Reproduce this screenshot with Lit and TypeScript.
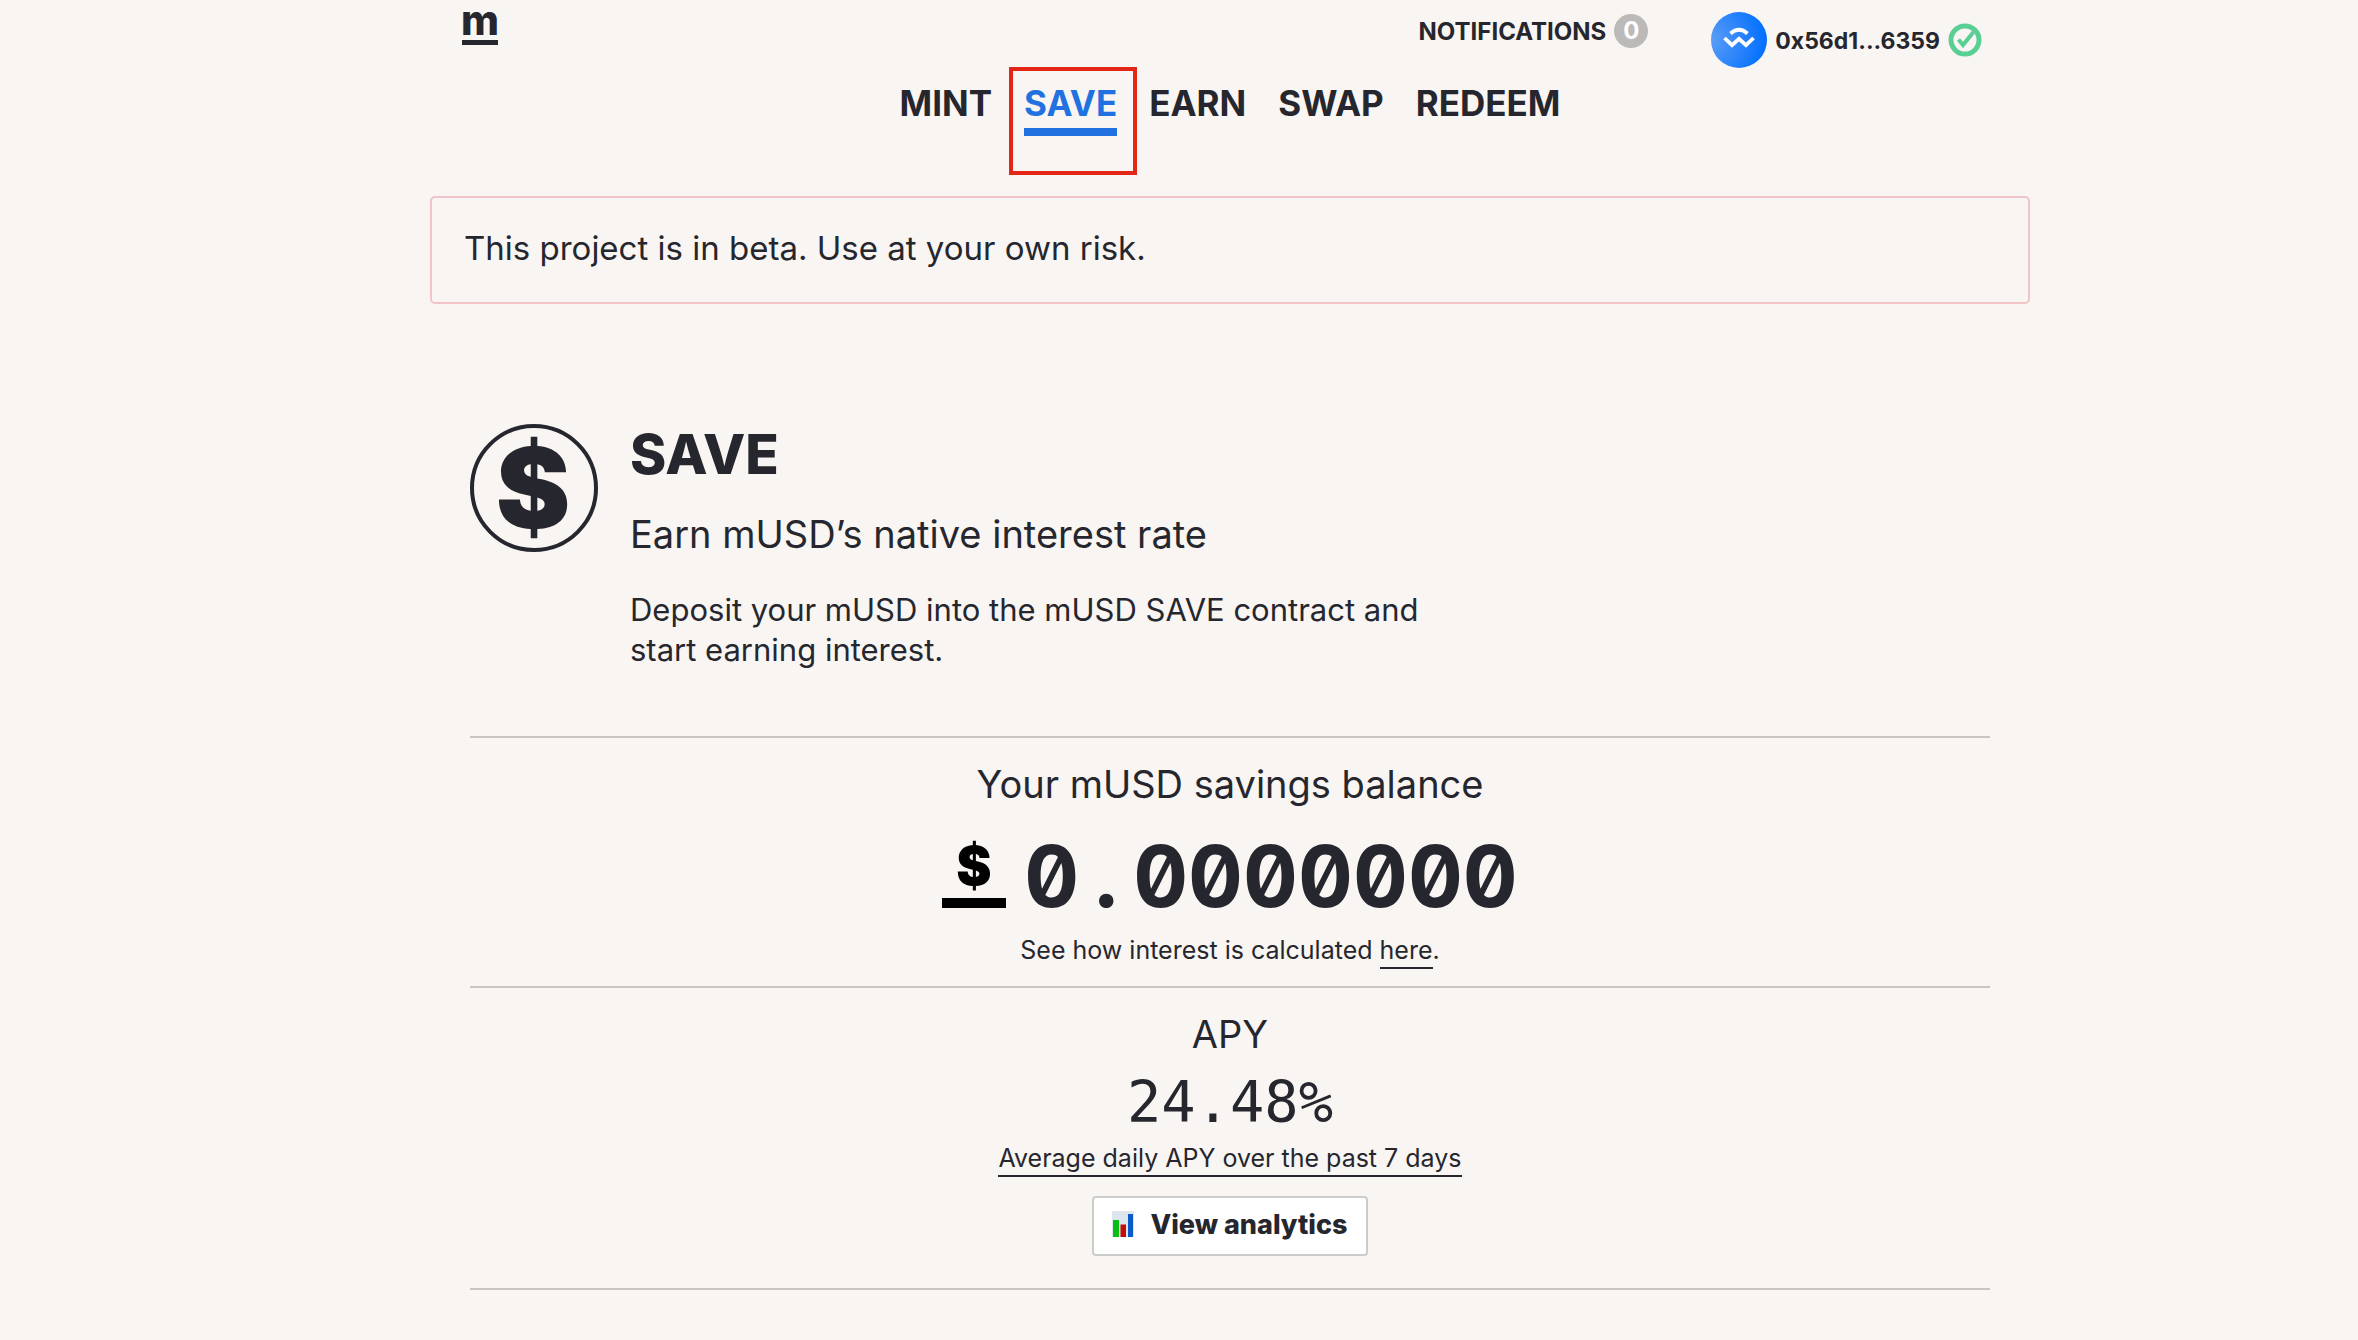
import { LitElement, html, css } from "lit";
import { customElement } from "lit/decorators.js";

interface NavItem { label: string; active?: boolean; }

const NAV: NavItem[] = [
  { label: "MINT" },
  { label: "SAVE", active: true },
  { label: "EARN" },
  { label: "SWAP" },
  { label: "REDEEM" },
];

@customElement("app-root")
export class AppRoot extends LitElement {
  static styles = css`
    :host {
      display: block;
      box-sizing: border-box;
      min-height: 100vh;
      padding-left: 102px;
      background: #f9f5f2;
      color: #26272e;
      font-family: Inter, "Open Sans", sans-serif;
    }
    * { box-sizing: border-box; margin: 0; }
    a { color: inherit; text-decoration: none; }
    svg { display: block; flex: none; overflow: visible; }
    .page { max-width: 1600px; margin: 0 auto; }
    .top { display: flex; align-items: flex-start; height: 80px; padding: 12px 48px 0 32px; }
    .brand { margin-right: auto; }
    button { font: inherit; color: inherit; background: none; border: 0; padding: 0; cursor: pointer; }
    .notifications, .wallet { display: flex; align-items: center; gap: 8px; font-size: 24px; font-weight: 700; }
    .notifications { height: 38px; margin-right: 63px; }
    .wallet { height: 56px; font-size: 23px; }
    .address { padding-top: 2px; }
    .badge { width: 34px; height: 34px; border-radius: 50%; background: #bcbab8; color: #fff; line-height: 34px; text-align: center; }
    .nav { display: flex; justify-content: center; gap: 32px; font-size: 35px; line-height: 46px; font-weight: 700; }
    .nav a { position: relative; padding-bottom: 2px; border-bottom: 8px solid transparent; }
    .nav a.active { color: #2172e0; border-color: #2172e0; }
    .marker { position: absolute; top: -13px; bottom: -47px; left: -15px; right: -20px; border: 4px solid #e42617; }
    .alert { margin-top: 60px; padding: 28px 32px 32px; border: 2px solid #f1c4c8; border-radius: 5px; font-size: 33px; line-height: 44px; }
    main { padding: 120px 40px 0; }
    .hero { display: flex; gap: 32px; padding-bottom: 66px; }
    h1 { font-size: 55px; line-height: 60px; font-weight: 800; margin-bottom: 26px; }
    h2 { font-size: 38px; line-height: 48px; font-weight: 400; }
    .lead { max-width: 820px; margin-top: 32px; font-size: 31px; line-height: 40px; }
    .panel { display: flex; flex-direction: column; align-items: center; padding-top: 22px; border-top: 2px solid #c8c4c1; }
    .balance { padding-bottom: 20px; }
    .amount { display: flex; align-items: center; gap: 18px; height: 80px; margin: 28px 0 18px; font-size: 85px; font-weight: 700; font-feature-settings: "tnum", "zero"; }
    .point { display: inline-block; width: 54px; text-align: center; }
    .note { font-size: 25px; line-height: 32px; }
    .note a { border-bottom: 2px solid #26272e; padding-bottom: 2px; }
    .rate { margin: 12px 0 8px; font-family: "DejaVu Sans Mono", monospace; font-size: 57px; line-height: 64px; }
    .apy { padding-bottom: 32px; border-bottom: 2px solid #c8c4c1; }
    .analytics { display: flex; align-items: center; gap: 16px; height: 60px; margin-top: 22px; padding: 0 18px 4px; border: 2px solid #cccccb; border-radius: 4px; background: #fff; font-size: 27px; font-weight: 800; }
  `;

  private coin() {
    return html`<svg width="128" height="128" viewBox="0 0 128 128" aria-hidden="true">
      <circle cx="64" cy="64" r="62" fill="none" stroke="#26272e" stroke-width="4"/>
      <text x="63" y="104" text-anchor="middle" font-size="112" font-weight="900" fill="#26272e">$</text>
    </svg>`;
  }

  render() {
    return html`
      <div class="page">
        <header>
          <div class="top">
            <a class="brand" href="#" aria-label="Home">
              <svg width="36" height="34" viewBox="0 0 36 34" fill="#26272e">
                <text x="18" y="23" text-anchor="middle" font-size="41" font-weight="800">m</text>
                <rect y="28" width="36" height="5"/>
              </svg>
            </a>
            <button class="notifications">NOTIFICATIONS <span class="badge">0</span></button>
            <button class="wallet">
              <svg width="56" height="56" viewBox="0 0 56 56">
                <defs><radialGradient id="wc" cx="0" cy="0.5" r="1"><stop stop-color="#5d9df6"/><stop offset="1" stop-color="#006fff"/></radialGradient></defs>
                <circle cx="28" cy="28" r="28" fill="url(#wc)"/>
                <path d="M19.5 21.5Q28 14 36.5 21.5M13.5 26L21 33.2L28 26.8L35 33.2L42.5 26" fill="none" stroke="#fff" stroke-width="3.8"/>
              </svg>
              <span class="address">0x56d1...6359</span>
              <svg width="34" height="34" viewBox="0 0 34 34">
                <circle cx="17" cy="17" r="14" fill="none" stroke="#5acf93" stroke-width="5"/>
                <path d="M10.5 16.5L15 22L25.5 9" fill="none" stroke="#5acf93" stroke-width="4"/>
              </svg>
            </button>
          </div>
          <nav class="nav">
            ${NAV.map((n) => html`<a href="#" class=${n.active ? "active" : ""}>${n.label}${n.active ? html`<span class="marker"></span>` : ""}</a>`)}
          </nav>
        </header>
        <div class="alert" role="alert">This project is in beta. Use at your own risk.</div>
        <main>
          <section class="hero">
            ${this.coin()}
            <div>
              <h1>SAVE</h1>
              <h2>Earn mUSD’s native interest rate</h2>
              <p class="lead">Deposit your mUSD into the mUSD SAVE contract and start earning interest.</p>
            </div>
          </section>
          <section class="panel balance">
            <h2>Your mUSD savings balance</h2>
            <div class="amount">
              <svg width="64" height="68" viewBox="0 0 64 68" aria-hidden="true">
                <text x="32" y="43" text-anchor="middle" font-size="53" font-weight="900">$</text>
                <rect y="56" width="64" height="10"/>
              </svg>
              <span>0<span class="point">.</span>0000000</span>
            </div>
            <p class="note">See how interest is calculated <a href="#">here</a>.</p>
          </section>
          <section class="panel apy">
            <h2>APY</h2>
            <div class="rate">24.48%</div>
            <p class="note"><a href="#">Average daily APY over the past 7 days</a></p>
            <button class="analytics">
              <svg width="22" height="26" viewBox="0 0 22 26" aria-hidden="true">
                <rect width="22" height="26" fill="#dde6ee"/>
                <rect x="1" y="9" width="6" height="17" fill="#06bd14"/>
                <rect x="8.5" y="13.5" width="5.5" height="12.5" fill="#c60b0b"/>
                <rect x="16" y="3" width="5" height="23" fill="#0a5bc9"/>
              </svg>
              View analytics
            </button>
          </section>
        </main>
      </div>
    `;
  }
}
